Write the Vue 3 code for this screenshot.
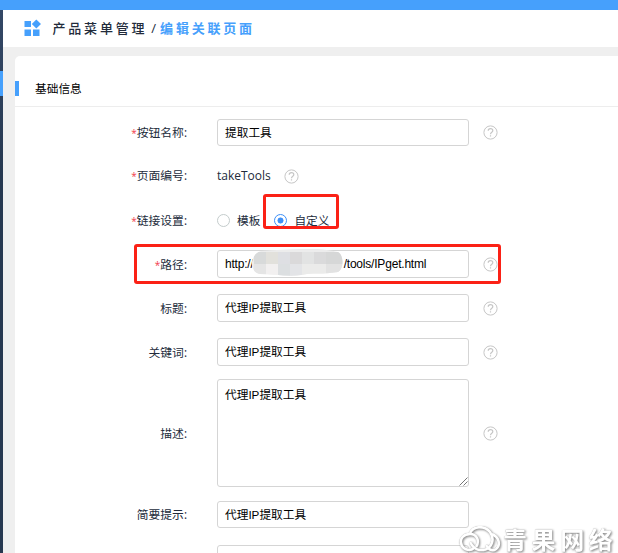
<script setup>
import { reactive } from 'vue'

const form = reactive({
  name: '提取工具',
  pageCode: 'takeTools',
  linkType: 'custom',
  title: '代理IP提取工具',
  keywords: '代理IP提取工具',
  description: '代理IP提取工具',
  tip: '代理IP提取工具',
  extra: '',
})

const rows = [
  { key: 'name', label: '按钮名称:', required: true, type: 'input', help: true },
  { key: 'pageCode', label: '页面编号:', required: true, type: 'text', help: true },
  { key: 'linkType', label: '链接设置:', required: true, type: 'radio' },
  { key: 'path', label: '路径:', required: true, type: 'path', help: true },
  { key: 'title', label: '标题:', type: 'input', help: true },
  { key: 'keywords', label: '关键词:', type: 'input', help: true },
  { key: 'description', label: '描述:', type: 'area', help: true },
  { key: 'tip', label: '简要提示:', type: 'input' },
  { key: 'extra', label: '', type: 'input' },
]
</script>

<template>
  <div class="screen">
    <div class="topbar"></div>
    <div class="body">
      <aside class="rail"><div class="rail-active"></div></aside>
      <main class="main">
        <header class="crumbs">
          <svg class="logo" width="18" height="16" viewBox="0 0 18 16" fill="#46a0fc">
            <rect x="1.5" y="1" width="6.5" height="6" />
            <rect x="1.5" y="9.5" width="6.5" height="6.5" />
            <rect x="10" y="9.5" width="6.5" height="6.5" />
            <path d="M13.3 -.5 18 4 13.3 8.5 8.8 4Z" />
          </svg>
          <span class="crumb">产品菜单管理</span>
          <span class="slash">/</span>
          <span class="crumb current">编辑关联页面</span>
        </header>
        <section class="card">
          <div class="card-head"><i class="marker"></i><h2>基础信息</h2></div>
          <div class="form">
            <div v-for="row in rows" :key="row.key" class="row" :class="['row-' + row.key]">
              <label class="label"><em v-if="row.required">*</em>{{ row.label }}</label>
              <input v-if="row.type === 'input'" v-model="form[row.key]" class="field" />
              <span v-else-if="row.type === 'text'" class="plain">{{ form[row.key] }}</span>
              <div v-else-if="row.type === 'radio'" class="radios">
                <span class="radio"><i class="dot"></i>模板</span>
                <span class="radio second"><i class="dot checked"></i>自定义</span>
              </div>
              <div v-else-if="row.type === 'path'" class="field path">
                <span>http://</span>
                <svg class="mosaic" width="94" height="27" viewBox="0 0 94 27">
                  <defs>
                    <clipPath id="smudge">
                      <path d="M11 2 C26 1 39 0 52 0 C67-1 78 1 88 3 C94 6 94 20 88 23 C72 26 62 23 51 26 C38 28 24 25 10 25 C-2 23 0 5 11 2Z" />
                    </clipPath>
                  </defs>
                  <g clip-path="url(#smudge)">
                    <rect width="94" height="27" fill="#ececec" />
                    <rect x="4" y="3" width="12" height="12" fill="#d8dada" />
                    <rect x="16" y="3" width="12" height="12" fill="#e2e1dc" />
                    <rect x="28" y="3" width="12" height="12" fill="#dedfe3" />
                    <rect x="40" y="3" width="12" height="12" fill="#dad9da" />
                    <rect x="52" y="3" width="12" height="12" fill="#e2e3e3" />
                    <rect x="64" y="3" width="12" height="12" fill="#dadadb" />
                    <rect x="76" y="3" width="18" height="12" fill="#d6d7d7" />
                    <rect x="4" y="15" width="12" height="12" fill="#e5e5e5" />
                    <rect x="16" y="15" width="12" height="12" fill="#f2f0f0" />
                    <rect x="28" y="15" width="12" height="12" fill="#dcdfe1" />
                    <rect x="40" y="15" width="12" height="12" fill="#e3e4e7" />
                    <rect x="52" y="15" width="24" height="12" fill="#ebebea" />
                    <rect x="76" y="15" width="18" height="12" fill="#e2e2e2" />
                  </g>
                </svg>
                <span>/tools/IPget.html</span>
              </div>
              <div v-else class="area-wrap">
                <textarea v-model="form[row.key]" class="field area"></textarea>
                <svg class="grip" width="9" height="9" viewBox="0 0 9 9" stroke="#666" stroke-width=".9">
                  <path d="M.5 8.5 8.5.5M4.5 8.5 8.5 4.5" />
                </svg>
              </div>
              <svg v-if="row.help" class="help" width="15" height="15" viewBox="0 0 15 15" fill="none" stroke="#c6c6c6">
                <circle cx="7.5" cy="7.5" r="6.6" />
                <path d="M5.2 5.8C5.2 2.9 9.8 3 9.8 5.7 9.8 7.3 7.5 7.2 7.5 9.3M7.5 10.3V11.6" stroke-width="1.2" />
              </svg>
            </div>
          </div>
        </section>
      </main>
    </div>
    <div class="mark mark-radio"></div>
    <div class="mark mark-path"></div>
    <div class="watermark">
      <svg width="42" height="27" viewBox="0 0 42 27" fill="none" stroke="#fff" stroke-width="2.6">
        <path d="M11 7C14 0 25-1 31 6C36 13 33 22 25 24" />
        <path d="M17 21C21 15 18 8 11 8C4 8 1 13 2 17C3 23 10 26 15 22" />
        <path d="M11 16C13 20 16 23 20 24H25M33 8C40 11 42 19 37 23C33 26 29 23 27 19" />
      </svg>
      <span>青果网络</span>
    </div>
  </div>
</template>

<style>
body { margin: 0; overflow: hidden; }
</style>

<style scoped>
* { box-sizing: border-box; }
.screen {
  position: relative;
  display: flex;
  flex-direction: column;
  width: 618px;
  height: 553px;
  overflow: hidden;
  background: #efefef;
  color: #222b3b;
  font: 12px/16px "Open Sans", "Noto Sans CJK SC", sans-serif;
}
.topbar { flex: none; height: 10px; background: #46a0fc; }
.body { display: flex; flex: 1; min-height: 0; }
.rail { flex: none; width: 3px; padding-top: 61px; background: linear-gradient(#344866, #263850 30%); }
.rail-active { height: 25px; background: #46a0fc; }
.main { flex: 1; min-width: 0; }
.crumbs {
  display: flex;
  align-items: center;
  height: 37px;
  padding: 0 0 1px 20px;
  background: #fff;
  font-size: 13px;
  font-weight: 500;
}
.logo { margin-right: 12px; margin-left: -.5px; overflow: visible; }
.crumb { letter-spacing: 2.8px; white-space: nowrap; }
.slash { margin: 0 4px 0 4px; }
.current { color: #46a0fc; font-weight: 700; }
.card { height: 520px; margin: 9px 0 0 12px; background: #fff; border-radius: 5px 0 0 0; }
.card-head { display: flex; align-items: center; height: 51px; padding-top: 14px; border-bottom: 1px solid #ededed; }
.marker { width: 4px; height: 15px; margin-right: 16px; background: #46a0fc; }
h2 { margin: 0; color: #000; font-size: 11.7px; font-weight: 400; }
.form { display: flex; flex-direction: column; gap: 16px; padding-top: 12px; }
.row { display: flex; flex: none; align-items: center; height: 28px; }
.row-name, .row-tip, .row-extra { height: 27px; }
.row-description { height: 108px; margin-top: -3px; }
.row-tip { margin-top: -2px; }
.row-extra { margin-top: 1px; }
.label {
  flex: none;
  width: 172px;
  margin-right: 30px;
  padding-bottom: 1px;
  text-align: right;
  font-size: 11.8px;
  white-space: nowrap;
}
.row-linkType .label, .row-path .label { padding-bottom: 0; }
.label em { color: #f23b4b; font-size: 10px; font-style: normal; }
.plain { font-size: 12px; }
.field {
  display: block;
  width: 252px;
  height: 100%;
  margin: 0;
  padding: 0 7px 2px;
  border: 1px solid #d5d5d5;
  border-radius: 3px;
  outline: none;
  background: #fff;
  color: #000;
  font: 11.7px/16px "Liberation Sans", "Noto Sans CJK SC", sans-serif;
}
.row-title .field, .row-keywords .field { padding-bottom: 3px; }
.path { display: flex; align-items: center; padding-bottom: 0; font-size: 12px; letter-spacing: -.2px; white-space: nowrap; }
.mosaic { flex: none; margin: -4px 0 0 -4px; }
.mosaic + span { margin-left: 0; }
.area-wrap { position: relative; width: 252px; height: 108px; }
.area { padding-top: 7px; resize: none; }
.grip { position: absolute; right: 1px; bottom: 1px; }
.help { flex: none; margin-left: 14px; }
.row-pageCode .help { margin-left: 13px; }
.radios { display: flex; align-items: center; font-size: 11.7px; }
.radio { display: flex; align-items: center; gap: 7px; }
.second { margin-left: 14px; }
.dot { width: 13px; height: 13px; border: 1px solid #c4cccc; border-radius: 50%; }
.checked { border-color: #3e90f7; background: radial-gradient(circle, #3e90f7 2.7px, #fff 3.3px); }
.mark { position: absolute; border: 3px solid #fb2116; border-radius: 3px; }
.mark-radio { left: 263px; top: 194px; width: 76px; height: 35px; }
.mark-path { left: 134px; top: 244px; width: 367px; height: 40px; }
.watermark {
  position: absolute;
  left: 459px;
  top: 526px;
  display: flex;
  align-items: center;
  gap: 2px;
  color: #fff;
  font-size: 24px;
  font-weight: 700;
  line-height: 26px;
  letter-spacing: 4.6px;
  white-space: nowrap;
  filter: drop-shadow(0 0 .5px #aaa) drop-shadow(1px 1px 1px #888);
}
.watermark span { height: 26px; }
</style>
